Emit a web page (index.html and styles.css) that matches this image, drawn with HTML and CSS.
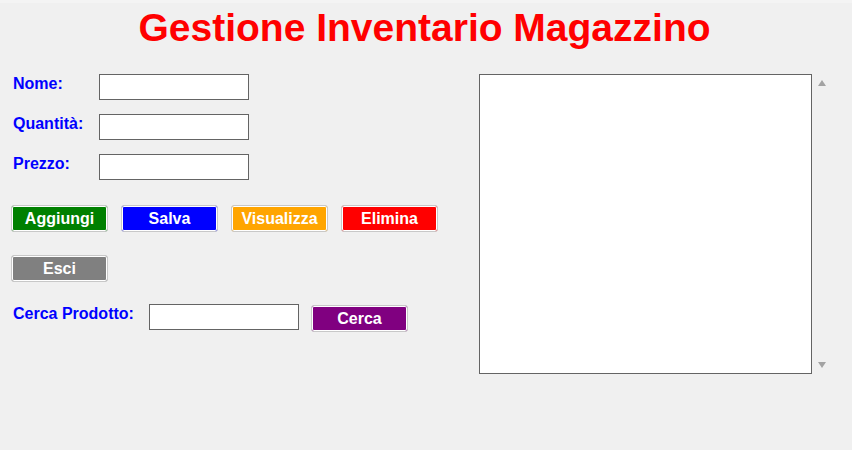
FILE: index.html
```html
<!DOCTYPE html>
<html lang="it">
<head>
<meta charset="utf-8">
<title>Gestione Inventario Magazzino</title>
<link rel="stylesheet" href="styles.css">
</head>
<body>
<div class="topstrip"></div>
<h1 class="title">Gestione Inventario Magazzino</h1>
<div class="main">
  <div class="left">
    <div class="field">
      <label class="label">Nome:</label>
      <input class="entry" type="text">
    </div>
    <div class="field">
      <label class="label">Quantità:</label>
      <input class="entry" type="text">
    </div>
    <div class="field">
      <label class="label">Prezzo:</label>
      <input class="entry" type="text">
    </div>
    <div class="btnrow">
      <button class="btn green">Aggiungi</button>
      <button class="btn blue">Salva</button>
      <button class="btn orange">Visualizza</button>
      <button class="btn red">Elimina</button>
    </div>
    <div class="btnrow exitrow">
      <button class="btn grey">Esci</button>
    </div>
    <div class="search">
      <label class="label wide">Cerca Prodotto:</label>
      <input class="entry" type="text">
      <button class="btn purple searchbtn">Cerca</button>
    </div>
  </div>
  <div class="right">
    <textarea class="output"></textarea>
    <div class="scroll">
      <span class="arrow up"></span>
      <span class="arrow down"></span>
    </div>
  </div>
</div>
</body>
</html>
```
FILE: styles.css
```css
html, body {
  margin: 0;
  padding: 0;
  background: #f0f0f0;
  font-family: "Liberation Sans", Arial, sans-serif;
  width: 852px;
  height: 450px;
  overflow: hidden;
}
.topstrip {
  height: 3px;
  background: #f4f4f4;
}
.title {
  margin: 0;
  height: 57px;
  box-sizing: border-box;
  padding-top: 2px;
  padding-right: 3px;
  text-align: center;
  color: #ff0000;
  font-size: 39px;
  font-weight: bold;
  line-height: 45px;
}
.main {
  display: flex;
  padding: 14px 0 0 11px;
}
.left {
  width: 468px;
  display: flex;
  flex-direction: column;
}
.field {
  display: flex;
  align-items: flex-start;
  margin-bottom: 14px;
}
.label {
  width: 86px;
  padding-left: 2px;
  color: #0000ff;
  font-size: 16px;
  font-weight: bold;
  line-height: 18px;
  padding-top: 1px;
}
.label.wide {
  width: 136px;
}
.entry {
  width: 150px;
  height: 26px;
  box-sizing: border-box;
  border: 1px solid #646464;
  background: #fff;
  margin: 0;
  padding: 0 3px;
  outline: none;
}
.btnrow {
  display: flex;
  gap: 13px;
  margin-top: 11px;
}
.exitrow {
  margin-top: 23px;
}
.btn {
  width: 97px;
  height: 27px;
  box-sizing: border-box;
  border: 1px solid #c8c8c8;
  border-radius: 3px;
  box-shadow: inset 0 0 0 1px #ffffff;
  color: #ffffff;
  font-family: "Liberation Sans", Arial, sans-serif;
  font-size: 16px;
  font-weight: bold;
  padding: 0;
  margin: 0;
  line-height: 23px;
}
.green { background: #008000; }
.blue { background: #0000ff; }
.orange { background: #ffa500; }
.red { background: #ff0000; }
.grey { background: #808080; }
.purple { background: #800080; }
.search {
  display: flex;
  align-items: flex-start;
  margin-top: 22px;
}
.searchbtn {
  margin-left: 12px;
  margin-top: 1px;
}
.right {
  display: flex;
}
.output {
  width: 333px;
  height: 300px;
  box-sizing: border-box;
  border: 1px solid #646464;
  background: #fff;
  margin: 0;
  padding: 0;
  resize: none;
  outline: none;
}
.scroll {
  width: 20px;
  height: 300px;
  display: flex;
  flex-direction: column;
  justify-content: space-between;
  align-items: center;
  padding: 6px 0;
  box-sizing: border-box;
}
.arrow {
  width: 0;
  height: 0;
  border-left: 4.5px solid transparent;
  border-right: 4.5px solid transparent;
}
.arrow.up {
  border-bottom: 6px solid #a3a3a3;
}
.arrow.down {
  border-top: 6px solid #a3a3a3;
}
```
